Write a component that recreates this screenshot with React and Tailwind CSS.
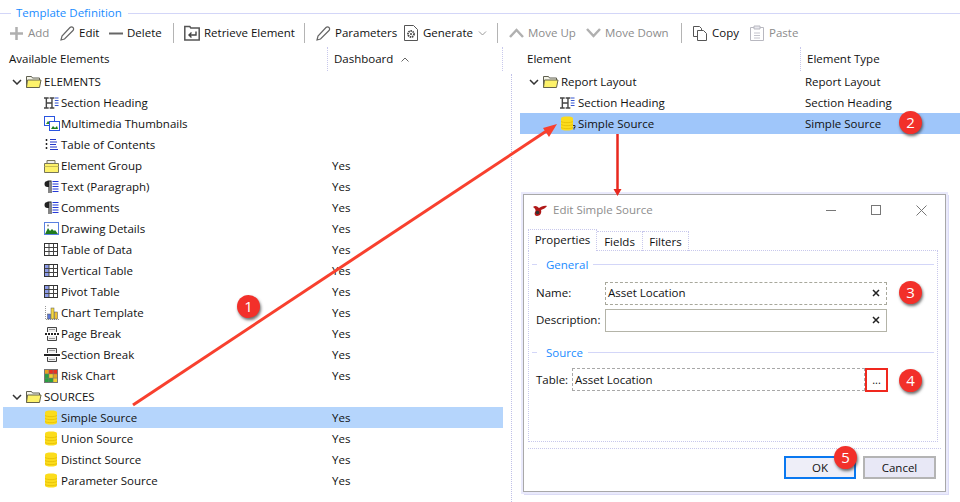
import React from 'react';

const FONT = 'font-["Open_Sans","Noto_Sans",sans-serif]';

// --- tree icons ---
function FolderIcon() {
  return (
    <svg width="17" height="15" viewBox="0 0 17 15" className="shrink-0">
      <path d="M1.500 13.500V2.500h5l1 1.500h7v2" fill="#f4f4e8" stroke="#5f5f50" />
      <path d="M1.500 13.500l1-7.500h13.500l-1.500 7.500z" fill="#fdf26a" stroke="#66644a" />
    </svg>
  );
}

function HeadingIcon() {
  return (
    <svg width="15" height="13" viewBox="0 0 16 13" preserveAspectRatio="none" className="shrink-0">
      <path d="M0 2h5M2.500 2v10M0 12h5M6 2h5M8.500 2v10M6 12h5M2.500 7h6" stroke="#444" strokeWidth="1.500" fill="none" />
      <path d="M11.500 2h4M11.500 4.500h4M11.500 7h4M11.500 9.500h4" stroke="#2e4fd0" fill="none" />
    </svg>
  );
}

function ThumbsIcon() {
  return (
    <svg width="16" height="15" viewBox="0 0 16 15" className="shrink-0">
      <rect x="0.500" y="0.500" width="10" height="9" fill="#fff" stroke="#2a55e0" />
      <path d="M2 8l2-3 2 2 2-2v3z" fill="#2a8a2a" />
      <rect x="5.500" y="5.500" width="10" height="9" fill="#fff" stroke="#2a55e0" />
      <path d="M7 13l2-3 2 2 2-2 1 3z" fill="#1f7f1f" />
    </svg>
  );
}

function TocIcon() {
  return (
    <svg width="15" height="13" viewBox="0 0 15 13" className="shrink-0">
      <path d="M2.500 1v2M2.500 5v2M2.500 9v2" stroke="#222" strokeWidth="1.500" />
      <path d="M6 1.500h6M6 4h7M6 6.500h6M6 9h7M6 11.500h8" stroke="#2438c8" fill="none" />
    </svg>
  );
}

function GroupIcon() {
  return (
    <svg width="15" height="14" viewBox="0 0 15 14" className="shrink-0">
      <path d="M0.500 4.500h14v9h-14z" fill="#fdf26a" stroke="#77755a" />
      <path d="M3 4V1.500h8V4" fill="#eee" stroke="#77755a" />
      <path d="M0.500 7.500h14" stroke="#c8bd50" />
    </svg>
  );
}

function ParaIcon() {
  return (
    <svg width="15" height="14" viewBox="0 0 15 14" className="shrink-0">
      <path d="M5 1H3.500a2.500 2.500 0 0 0 0 6H5V1z" fill="#222" />
      <path d="M5 1v12M7 1v12M3.500 1H7.500" stroke="#222" strokeWidth="1.100" fill="none" />
      <path d="M8.500 1.500h6M8.500 4h6M8.500 6.500h6M8.500 9h6M8.500 11.500h6" stroke="#2438d8" fill="none" />
    </svg>
  );
}

function DrawingIcon() {
  return (
    <svg width="15" height="13" viewBox="0 0 15 13" className="shrink-0">
      <rect x="0.500" y="0.500" width="14" height="12" fill="#fff" stroke="#5a80e0" />
      <path d="M1 12l3-6 2 3 2-2 2 2 1-1 3 4z" fill="#1f7a1f" />
      <circle cx="4" cy="3.500" r="1" fill="#888" />
    </svg>
  );
}

function TableIcon({ head }) {
  return (
    <svg width="14" height="13" viewBox="0 0 14 13" className="shrink-0">
      <rect x="0.500" y="0.500" width="13" height="12" fill="#fff" stroke="#333" />
      {head && <rect x="1" y="1" width="4" height="11" fill="#8c9be8" />}
      <path d="M5 1v11M9.500 1v11M1 4.500h12M1 8.500h12" stroke="#444" fill="none" />
    </svg>
  );
}

function ChartIcon() {
  return (
    <svg width="15" height="16" viewBox="0 0 15 16" className="shrink-0">
      <path d="M1.500 1v13.500H15" stroke="#999" strokeDasharray="1 1" fill="none" />
      <rect x="3.500" y="9" width="3" height="5" fill="#5a78d8" stroke="#555" strokeWidth="0.500" />
      <rect x="7" y="3" width="3" height="11" fill="#f4d840" stroke="#555" strokeWidth="0.500" />
      <rect x="10.500" y="7" width="3" height="7" fill="#f0c030" stroke="#555" strokeWidth="0.500" />
    </svg>
  );
}

function BreakIcon({ section }) {
  return (
    <svg width="16" height="14" viewBox="0 0 16 14" className="shrink-0">
      <path d="M3.500 5V0.500h9V5M3.500 9v4.500h9V9" fill="#eee" stroke="#444" />
      <path d="M5 2.500h6M5 11.500h6" stroke="#999" />
      <path d={section ? 'M0 7h16' : 'M1 7h14'} stroke="#222" strokeWidth="2" strokeDasharray={section ? 'none' : '2 1'} />
    </svg>
  );
}

function RiskIcon() {
  const c = ['#e8a020', '#e83020', '#e83020', '#2aa040', '#f0d030', '#e8a020', '#2aa040', '#2aa040', '#f0d030'];
  return (
    <svg width="14" height="14" viewBox="0 0 14 14" className="shrink-0">
      <rect width="14" height="14" fill="#777" />
      {c.map((f, i) => (
        <rect key={i} x={1 + (i % 3) * 4.2} y={1 + Math.floor(i / 3) * 4.2} width="3.600" height="3.600" fill={f} />
      ))}
    </svg>
  );
}

function DbIcon({ tag }) {
  return (
    <svg width="16" height="15" viewBox="0 0 16 15" className="shrink-0">
      <path d="M1 2.500C1 1 3.500 0.500 7 0.500S13 1 13 2.500v10C13 14 10.500 14.500 7 14.500S1 14 1 12.500z" fill="#fbdc1c" />
      <path d="M1 5.500c2 1.500 10 1.500 12 0M1 8.500c2 1.500 10 1.500 12 0M1 11.500c2 1.500 10 1.500 12 0" stroke="#eac408" fill="none" />
      {tag && <path d="M13 9.500h2v2h-1v2" stroke="#333" fill="none" />}
    </svg>
  );
}

// --- toolbar ---
function Tool({ icon, label, disabled, w, gap = 'gap-[4px]' }) {
  return (
    <div className={`flex shrink-0 items-center ${gap} ${w} ${disabled ? 'text-[#8c8c8c]' : 'text-[#111]'}`}>
      {icon}
      <span>{label}</span>
    </div>
  );
}

function Sep({ mr }) {
  return <div className={`h-[20px] w-px bg-[#b4b4b4] ${mr}`} />;
}

const PlusIcon = (
  <svg width="15" height="15" viewBox="0 0 15 15" className="shrink-0"><path d="M7.500 1v13M1 7.500h13" stroke="#b0b0b0" strokeWidth="2.500" /></svg>
);
const PencilIcon = (
  <svg width="15" height="15" viewBox="0 0 15 15" className="shrink-0"><path d="M1 14l1-4 8-8.500a1.500 1.500 0 0 1 3 3L4.500 13z" fill="none" stroke="#666" strokeWidth="1.200" /></svg>
);
const MinusIcon = (
  <svg width="14" height="15" viewBox="0 0 14 15" className="shrink-0"><path d="M0 7.500h14" stroke="#666" strokeWidth="2" /></svg>
);
const RetrieveIcon = (
  <svg width="16" height="16" viewBox="0 0 16 16" className="shrink-0">
    <path d="M0.800 15V1.500h5l1 1.500h8.400v12z" fill="#fff" stroke="#555" strokeWidth="1.500" />
    <path d="M12 6.500v3.500H5M7.500 7.500L5 10l2.500 2.500" fill="none" stroke="#444" strokeWidth="1.400" />
  </svg>
);
const GenerateIcon = (
  <svg width="14" height="16" viewBox="0 0 14 16" className="shrink-0">
    <path d="M0.500 0.500h9l4 4v11h-13z" fill="#fff" stroke="#555" />
    <circle cx="7" cy="9" r="3" fill="none" stroke="#444" strokeWidth="1.800" strokeDasharray="1.500 0.700" />
    <circle cx="7" cy="9" r="1" fill="#444" />
  </svg>
);
const UpIcon = (
  <svg width="15" height="10" viewBox="0 0 15 10" className="shrink-0"><path d="M1 9l6.500-7L14 9" fill="none" stroke="#b0b0b0" strokeWidth="2.500" /></svg>
);
const DownIcon = (
  <svg width="15" height="10" viewBox="0 0 15 10" className="shrink-0"><path d="M1 1l6.500 7L14 1" fill="none" stroke="#b0b0b0" strokeWidth="2.500" /></svg>
);
const CopyIcon = (
  <svg width="14" height="15" viewBox="0 0 14 15" className="shrink-0">
    <path d="M0.500 0.500h6l2 2v8h-8z" fill="#fff" stroke="#555" />
    <path d="M4.500 4.500h6l3 3v7h-9z" fill="#fff" stroke="#555" />
  </svg>
);
const PasteIcon = (
  <svg width="14" height="16" viewBox="0 0 14 16" className="shrink-0">
    <path d="M0.500 2.500h13v13h-13z" fill="#fff" stroke="#b8b8c0" />
    <path d="M4 1h6v3H4z" fill="#e8e8ee" stroke="#b8b8c0" />
    <path d="M4 8h6M4 10.500h6M4 13h6" stroke="#c4c4cc" />
  </svg>
);

// --- data ---
const ELEMENTS = [
  { icon: <HeadingIcon />, label: 'Section Heading' },
  { icon: <ThumbsIcon />, label: 'Multimedia Thumbnails' },
  { icon: <TocIcon />, label: 'Table of Contents' },
  { icon: <GroupIcon />, label: 'Element Group', yes: true },
  { icon: <ParaIcon />, label: 'Text (Paragraph)', yes: true },
  { icon: <ParaIcon />, label: 'Comments', yes: true },
  { icon: <DrawingIcon />, label: 'Drawing Details', yes: true },
  { icon: <TableIcon />, label: 'Table of Data', yes: true },
  { icon: <TableIcon head />, label: 'Vertical Table', yes: true },
  { icon: <TableIcon head />, label: 'Pivot Table', yes: true },
  { icon: <ChartIcon />, label: 'Chart Template', yes: true },
  { icon: <BreakIcon />, label: 'Page Break', yes: true },
  { icon: <BreakIcon section />, label: 'Section Break', yes: true },
  { icon: <RiskIcon />, label: 'Risk Chart', yes: true },
];

const SOURCES = ['Simple Source', 'Union Source', 'Distinct Source', 'Parameter Source'];

function Chevron() {
  return (
    <svg width="10" height="6" viewBox="0 0 10 6" className="shrink-0">
      <path d="M1 1l4 4 4-4" fill="none" stroke="#333" strokeWidth="1.500" />
    </svg>
  );
}

function GroupRow({ label }) {
  return (
    <div className="flex h-[21px] items-center pl-[9px]">
      <Chevron />
      <span className="ml-[3px] flex items-center gap-[2px]">
        <FolderIcon />
        <span>{label}</span>
      </span>
    </div>
  );
}

function LeafRow({ icon, label, yes, selected }) {
  return (
    <div className={`flex h-[21px] items-center ${selected ? 'bg-[#b5d5fc]' : ''}`}>
      <div className="flex w-[329px] items-center pl-[41px]">
        <div className="flex w-[17px] shrink-0 items-center justify-start">{icon}</div>
        <span>{label}</span>
      </div>
      {yes && <span>Yes</span>}
    </div>
  );
}

function Badge({ n, className }) {
  return (
    <div className={`absolute flex h-[23px] w-[23px] items-center justify-center rounded-full bg-[#f2302a] text-[15px] text-white shadow-[1px_2px_3px_rgba(50,50,50,0.7)] ${className}`}>
      {n}
    </div>
  );
}

function Heading({ label }) {
  return (
    <div className="flex items-center">
      <div className="h-px w-[5px] bg-[#d3d6f8]" />
      <span className="ml-[9px] mr-[5px] text-[#1a8cff]">{label}</span>
      <div className="h-px flex-1 bg-[#d3d6f8]" />
    </div>
  );
}

function ClearX() {
  return (
    <svg width="8" height="8" viewBox="0 0 8 8" className="shrink-0">
      <path d="M1 1l6 6M7 1L1 7" stroke="#222" strokeWidth="1.500" />
    </svg>
  );
}

function Dialog() {
  return (
    <div className="absolute left-[523px] top-[194px] flex h-[298px] w-[423px] flex-col border border-[#a8a8a8] bg-white shadow-[0_0_0_2px_#eaeafc,2px_2px_0_1px_#dcdcf6]">
      {/* title bar */}
      <div className="flex h-[30px] shrink-0 items-center pl-[8px] text-[#8d8d8d]">
        <svg width="16" height="13" viewBox="0 0 16 13" className="shrink-0">
          <path d="M1 3c2-2 4-1 6 1 2-1 5-3 8-2-1 2-4 3-6 4 1 3-1 6-4 6-2 0-3-2-2-4 1-1 1-3-2-5z" fill="#b01818" />
          <circle cx="5.500" cy="8.500" r="1.800" fill="#333" />
        </svg>
        <span className="ml-[5px]">Edit Simple Source</span>
        <div className="ml-auto flex items-center">
          <div className="h-px w-[10px] bg-[#777]" />
          <div className="ml-[35px] h-[10px] w-[10px] border border-[#777]" />
          <svg width="11" height="11" viewBox="0 0 11 11" className="ml-[35px] mr-[18px]">
            <path d="M0.500 0.500l10 10M10.500 0.500l-10 10" stroke="#777" />
          </svg>
        </div>
      </div>
      {/* tabs */}
      <div className="ml-[4px] mt-[4px] flex h-[22px] shrink-0 items-end text-[#111]">
        <div className="relative z-10 flex h-[22px] w-[69px] items-center justify-center border-x border-t border-dotted border-[#c8c8ec] bg-white pb-[2px]">Properties</div>
        <div className="flex h-[20px] w-[46px] items-center justify-center border-r border-t border-dotted border-[#c8c8ec]">Fields</div>
        <div className="flex h-[20px] w-[46px] items-center justify-center border-r border-t border-dotted border-[#c8c8ec]">Filters</div>
      </div>
      {/* panel */}
      <div className="ml-[4px] -mt-px flex h-[192px] w-[410px] shrink-0 flex-col border border-dotted border-[#c8c8ec] px-[3px] pt-[8px] text-[#111]">
        <Heading label="General" />
        <div className="mt-[11px] flex h-[23px] items-center pl-[4px]">
          <span className="w-[69px] shrink-0">Name:</span>
          <div className="flex h-[23px] w-[282px] items-center justify-between border border-dashed border-[#a8a89c] pl-[2px] pr-[6px]">
            <span>Asset Location</span>
            <ClearX />
          </div>
        </div>
        <div className="mt-[4px] flex h-[23px] items-center pl-[4px]">
          <span className="w-[69px] shrink-0">Description:</span>
          <div className="flex h-[23px] w-[282px] items-center justify-end border border-[#b4b4a8] pr-[6px]">
            <ClearX />
          </div>
        </div>
        <div className="mt-[15px]">
          <Heading label="Source" />
        </div>
        <div className="mt-[10px] flex h-[23px] items-center pl-[4px]">
          <span className="w-[36px] shrink-0">Table:</span>
          <div className="flex h-[23px] w-[293px] items-center border border-dashed border-[#a8a8a8] pl-[2px]">Asset Location</div>
          <div className="flex h-[24px] w-[23px] items-center justify-center border-2 border-[#f0281e] text-[11px]">...</div>
        </div>
      </div>
      {/* footer */}
      <div className="mx-[4px] mt-[6px] border-t border-dotted border-[#c8c8ec]" />
      <div className="mt-[7px] flex justify-end gap-[7px] pr-[9px] text-[#111]">
        <button className="flex h-[23px] w-[72px] items-center justify-center border-2 border-[#0a78f0] bg-[#eeeef8]">OK</button>
        <button className="flex h-[23px] w-[73px] items-center justify-center border-2 border-[#b4b4b4] bg-[#e8e8f6]">Cancel</button>
      </div>
    </div>
  );
}

export default function App() {
  return (
    <div className={`relative h-[502px] w-[960px] overflow-hidden bg-white text-[11.5px] leading-none text-[#111] ${FONT}`}>
      {/* Title */}
      <div className="flex h-[23px] items-center pt-[3px]">
        <div className="h-px w-[11px] bg-[#d3d6f8]" />
        <span className="ml-[5px] mr-[6px] text-[#1a8cff]">Template Definition</span>
        <div className="h-px flex-1 bg-[#d3d6f8]" />
      </div>

      {/* Toolbar */}
      <div className="flex h-[20px] items-center pl-[9px]">
        <Tool icon={PlusIcon} label="Add" disabled w="w-[51px]" />
        <Tool icon={PencilIcon} label="Edit" w="w-[49px]" />
        <Tool icon={MinusIcon} label="Delete" w="w-[64px]" />
        <Sep mr="mr-[10px]" />
        <Tool icon={RetrieveIcon} label="Retrieve Element" w="w-[120px]" />
        <Sep mr="mr-[11px]" />
        <Tool icon={PencilIcon} label="Parameters" w="w-[88px]" />
        <Tool icon={GenerateIcon} label="Generate" gap="gap-[5px]" w="w-[74px]" />
        <svg width="9" height="5" viewBox="0 0 9 5" className="mr-[10px] shrink-0"><path d="M1 0.500l3.500 3.500L8 0.500" fill="none" stroke="#999" /></svg>
        <Sep mr="mr-[11px]" />
        <Tool icon={UpIcon} label="Move Up" disabled w="w-[77px]" />
        <Tool icon={DownIcon} label="Move Down" disabled w="w-[95px]" />
        <Sep mr="mr-[11px]" />
        <Tool icon={CopyIcon} label="Copy" gap="gap-[5px]" w="w-[57px]" />
        <Tool icon={PasteIcon} label="Paste" disabled gap="gap-[5px]" />
      </div>

      {/* Column headers */}
      <div className="flex h-[28px] items-center pt-[4px]">
        <div className="w-[327px] pl-[9px]">Available Elements</div>
        <div className="flex h-[24px] w-[175px] items-center border-l border-dotted border-[#c8c8ec] pl-[6px]">
          Dashboard
          <svg width="8" height="5" viewBox="0 0 8 5" className="ml-[8px]"><path d="M0.500 4.500L4 1l3.500 3.500" fill="none" stroke="#666" /></svg>
        </div>
        <div className="flex h-[24px] w-[298px] items-center border-l border-dotted border-[#c8c8ec] pl-[24px]">Element</div>
        <div className="flex h-[24px] items-center border-l border-dotted border-[#c8c8ec] pl-[6px]">Element Type</div>
      </div>

      {/* Panes */}
      <div className="flex">
        <div className="ml-[3px] w-[500px]">
          <GroupRow label="ELEMENTS" />
          {ELEMENTS.map((e) => (
            <LeafRow key={e.label} {...e} />
          ))}
          <GroupRow label="SOURCES" />
          {SOURCES.map((s, i) => (
            <LeafRow key={s} icon={<DbIcon />} label={s} yes selected={i === 0} />
          ))}
        </div>
        <div className="ml-[8px] mt-[3px] h-[428px] flex-1 border-l border-dotted border-[#c0c0e8] pl-[8px]">
          <div className="-mt-[3px]">
            <div className="flex h-[21px] items-center">
              <div className="flex w-[285px] items-center pl-[9px]">
                <Chevron />
                <span className="ml-[3px] flex items-center gap-[2px]">
                  <FolderIcon />
                  <span>Report Layout</span>
                </span>
              </div>
              <span>Report Layout</span>
            </div>
            <div className="flex h-[21px] items-center">
              <div className="flex w-[285px] items-center pl-[40px]">
                <div className="w-[18px]"><HeadingIcon /></div>
                <span>Section Heading</span>
              </div>
              <span>Section Heading</span>
            </div>
            <div className="flex h-[21px] items-center bg-[#9fc6fa]">
              <div className="flex w-[285px] items-center pl-[40px]">
                <div className="w-[18px]"><DbIcon tag /></div>
                <span>Simple Source</span>
              </div>
              <span>Simple Source</span>
            </div>
          </div>
        </div>
      </div>

      <Dialog />

      {/* Callout arrows */}
      <svg width="960" height="502" viewBox="0 0 960 502" className="pointer-events-none absolute left-0 top-0">
        <path d="M133 405L548 130" stroke="#f8402e" strokeWidth="3" fill="none" />
        <path d="M557 124L543 128L549 137z" fill="#f8402e" />
        <path d="M617.500 134V190" stroke="#e8281e" strokeWidth="2.500" fill="none" />
        <path d="M613.500 189h8l-4 7z" fill="#e8281e" />
      </svg>

      <Badge n="1" className="left-[237px] top-[295px]" />
      <Badge n="2" className="left-[899px] top-[111px]" />
      <Badge n="3" className="left-[899px] top-[281px]" />
      <Badge n="4" className="left-[899px] top-[369px]" />
      <Badge n="5" className="left-[834px] top-[446px]" />
    </div>
  );
}
